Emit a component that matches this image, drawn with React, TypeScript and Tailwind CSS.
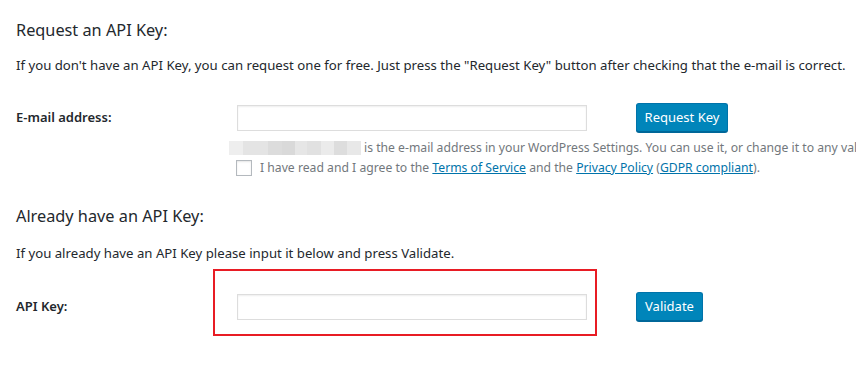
import React from "react";

export default function App() {
  const font = { fontFamily: '"Noto Sans", "Open Sans", sans-serif' };
  return (
    <div className="w-[856px] h-[391px] overflow-hidden bg-white text-[#23282d] relative" style={font}>
      <div className="pl-4 pt-[19px]">
        <h2 className="text-[16.3px] leading-[22px] font-normal">Request an API Key:</h2>
        <p className="mt-[15px] text-[13.2px] leading-[18px] whitespace-nowrap">
          If you don't have an API Key, you can request one for free. Just press the "Request Key" button after checking that the e-mail is correct.
        </p>
        <div className="mt-[29px] flex">
          <div className="w-[221px] h-[29px] flex items-center text-[13px] font-semibold">E-mail address:</div>
          <div className="flex flex-col">
            <div className="flex items-center h-[29px]">
              <div className="w-[350px] h-[26px] border border-[#ddd] shadow-[inset_0_1px_2px_rgba(0,0,0,0.07)] bg-white" />
              <button className="ml-[49px] h-[29px] w-[92px] rounded-[3px] bg-[#0085ba] border border-[#0073aa] border-b-[#006799] shadow-[0_1px_0_#006799] text-white text-[13px]">
                Request Key
              </button>
            </div>
          </div>
        </div>
        <div className="ml-[213px] mt-[9px] flex items-center h-[14px] whitespace-nowrap text-[12.2px] leading-[20px] text-[#72777c]">
          <div className="flex h-[14px] w-[132px] shrink-0">
            <div className="w-[14px] bg-[#eeeeee]" />
            <div className="w-[25px] bg-[#e4e4e4]" />
            <div className="w-[14px] bg-[#dcdcdc]" />
            <div className="w-[13px] bg-[#d9d9d9]" />
            <div className="w-[12px] bg-[#e6e6e6]" />
            <div className="w-[14px] bg-[#e1e1e1]" />
            <div className="w-[13px] bg-[#ebebeb]" />
            <div className="w-[13px] bg-[#dddddd]" />
            <div className="w-[14px] bg-[#e8e8e8]" />
          </div>
          <span className="ml-[3px]">is the e-mail address in your WordPress Settings. You can use it, or change it to any valid e-mail address.</span>
        </div>
        <div className="ml-[220px] mt-[3px] flex items-center whitespace-nowrap text-[12.2px] leading-[20px] text-[#72777c]">
          <div className="w-[16px] h-[16px] border border-[#b4b9be] bg-white shadow-[inset_0_1px_2px_rgba(0,0,0,0.1)]" />
          <span className="ml-[8px]">
            I have read and I agree to the <a className="text-[#0073aa] underline">Terms of Service</a> and the{" "}
            <a className="text-[#0073aa] underline">Privacy Policy</a> (<a className="text-[#0073aa] underline">GDPR compliant</a>).
          </span>
        </div>
        <h2 className="mt-[27px] text-[16.3px] leading-[22px] font-normal">Already have an API Key:</h2>
        <p className="mt-[17px] text-[13.2px] leading-[18px] whitespace-nowrap">
          If you already have an API Key please input it below and press Validate.
        </p>
        <div className="mt-[30px] flex items-center h-[29px]">
          <div className="w-[221px] text-[13px] font-semibold">API Key:</div>
          <div className="w-[350px] h-[26px] border border-[#ddd] shadow-[inset_0_1px_2px_rgba(0,0,0,0.07)] bg-white" />
          <button className="ml-[49px] h-[29px] w-[67px] rounded-[3px] bg-[#0085ba] border border-[#0073aa] border-b-[#006799] shadow-[0_1px_0_#006799] text-white text-[13px]">
            Validate
          </button>
        </div>
      </div>
      <div className="absolute left-[213px] top-[269px] w-[384px] h-[67px] border-2 border-[#e81c24]" />
    </div>
  );
}
